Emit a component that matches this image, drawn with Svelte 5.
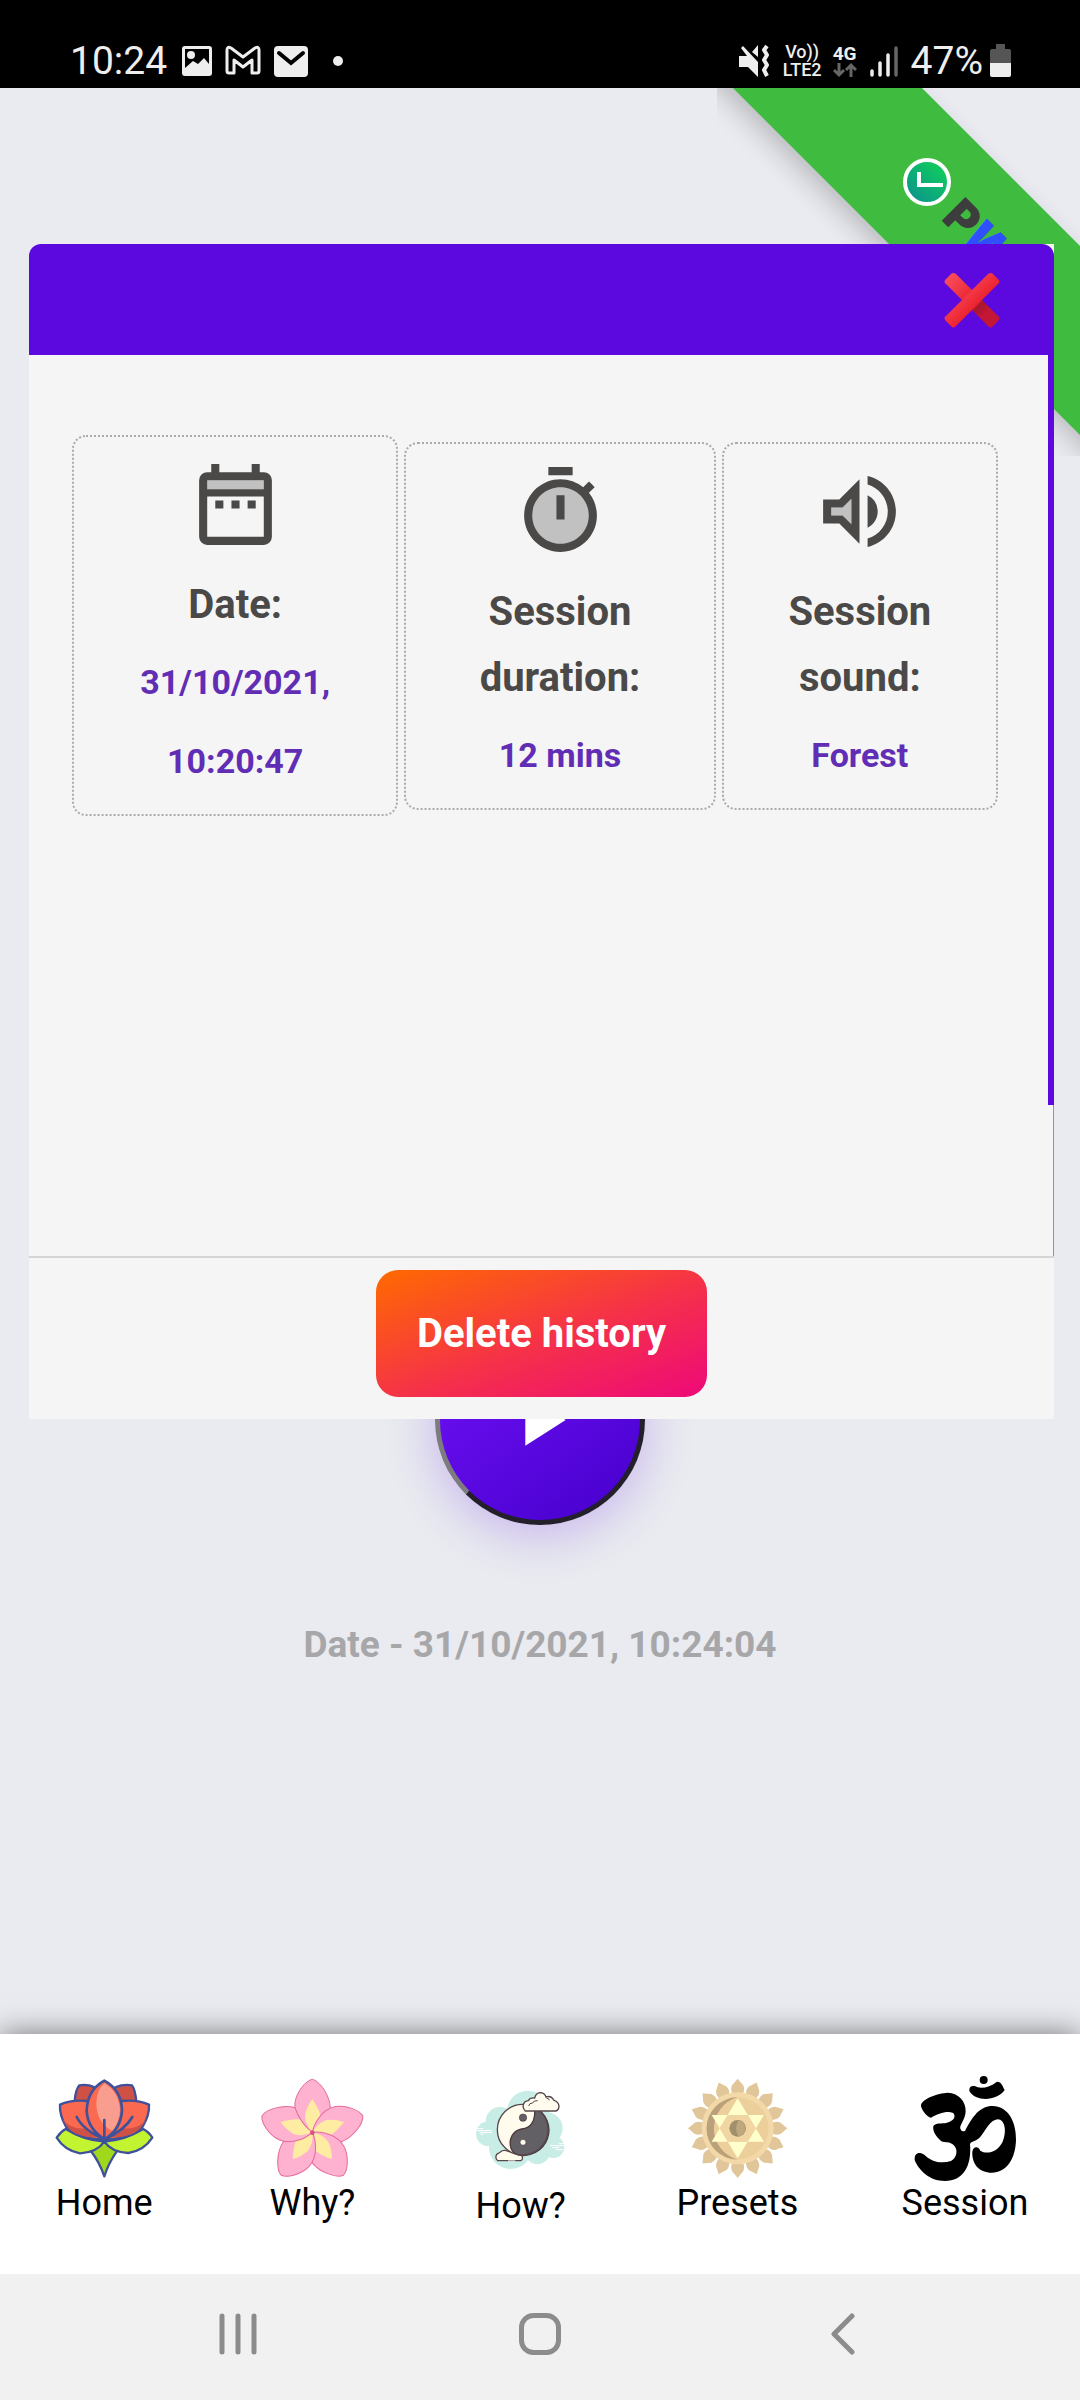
<script>
  const petals = [0, 72, 144, 216, 288];
  const rays = Array.from({ length: 16 }, (_, i) => i * 22.5);
</script>

<svelte:head><title>Meditation session history</title></svelte:head>

<div class="screen">
  <header class="status">
    <div class="status-group">
      <span class="clock">10:24</span>
      <svg width="32" height="32" viewBox="0 0 32 32"><rect x="1" y="1" width="30" height="30" rx="3" fill="#eee" /><path d="M4 4H28V19L23 13L17 19L12 16L4 23Z" fill="#000" /><circle cx="10" cy="10" r="4" fill="#eee" /></svg>
      <svg class="gmail" width="36" height="32" viewBox="0 0 36 32"><path d="M2 5Q2 1 6 3L18 12L30 3Q34 1 34 5V26Q34 28 32 28H27V15L18 22L9 15V28H4Q2 28 2 26Z" fill="none" stroke="#eee" stroke-width="3" stroke-linejoin="round" /></svg>
      <svg width="36" height="32" viewBox="0 0 36 32"><rect x="1" y="1" width="34" height="31" rx="4" fill="#eee" /><path d="M6 8L18 18L30 8" fill="none" stroke="#000" stroke-width="4" stroke-linecap="round" /></svg>
      <span class="dot"></span>
    </div>
    <div class="status-group right">
      <svg width="32" height="34" viewBox="0 0 32 34"><path d="M1 12H9L3 4L5 2L20 18V33L10 23H1ZM20 1V13L14 8Z" fill="#eee" /><path d="M29 2L26 6L29 11L26 16L29 21L26 26L29 32" fill="none" stroke="#eee" stroke-width="4" stroke-linejoin="round" /></svg>
      <span class="volte"><span>Vo))</span><span>LTE2</span></span>
      <span class="net"><span>4G</span>
        <svg width="24" height="16" viewBox="0 0 24 16"><path d="M6 1V13M1 8L6 13L11 8M18 15V3M13 8L18 3L23 8" fill="none" stroke="#666" stroke-width="3" /></svg>
      </span>
      <svg class="signal" width="28" height="32" viewBox="0 0 28 32"><path d="M2 26V30M10 18V30M18 10V30" stroke="#eee" stroke-width="3.5" stroke-linecap="round" /><path d="M26 3V30" stroke="#666" stroke-width="3.5" stroke-linecap="round" /></svg>
      <span class="clock">47%</span>
      <svg width="21" height="34" viewBox="0 0 21 34"><path d="M6 0H15V5H19Q21 5 21 7V20H0V7Q0 5 2 5H6Z" fill="#555" /><path d="M0 19H21V31Q21 33 19 33H2Q0 33 0 31Z" fill="#eee" /></svg>
    </div>
  </header>

  <main>
    <a class="ribbon" href="#install" aria-label="Install PWA">
      <svg width="363" height="368" viewBox="717 88 363 368">
        <defs>
          <linearGradient id="clock" x1="0" y1="1" x2="1" y2="0"><stop offset=".1" stop-color="#0b938e" /><stop offset=".85" stop-color="#10cc5c" /></linearGradient>
          <filter id="soft" x="-20%" y="-20%" width="140%" height="140%"><feGaussianBlur stdDeviation="15" /></filter>
        </defs>
        <path d="M627 -6H802L1180 366V541Z" fill="#000" opacity=".24" filter="url(#soft)" />
        <path d="M633 -12H822L1180 346V535Z" fill="#3fbc3f" />
        <circle cx="927" cy="182" r="22" fill="url(#clock)" stroke="#fff" stroke-width="4" />
        <path d="M919 172V185H943" fill="none" stroke="#fff" stroke-width="4" />
        <g transform="translate(943 222) rotate(45)" class="pwa"><text fill="#3d3d3d" x="-4" y="0">P</text><text fill="#3050ff" x="24" y="0" font-style="italic">W</text><text fill="#3d3d3d" x="73" y="0">A</text></g>
      </svg>
    </a>

    <button class="play" aria-label="Start session">
      <svg width="88" height="88" viewBox="0 0 24 24"><path d="M8 5v14l11-7z" fill="#fff" /></svg>
    </button>
    <p class="today">Date - 31/10/2021, 10:24:04</p>

    <section class="modal" role="dialog" aria-label="Session history">
      <div class="modal-head">
        <button class="close" aria-label="Close">
          <svg width="56" height="56" viewBox="0 0 56 56">
            <defs>
              <linearGradient id="xa" x1="0" y1="0" x2="1" y2="1"><stop offset="0" stop-color="#fb5561" /><stop offset=".5" stop-color="#e8212e" /><stop offset=".62" stop-color="#a8162e" /><stop offset=".75" stop-color="#c41735" /></linearGradient>
              <linearGradient id="xb" x1=".3" y1=".3" x2=".65" y2=".65"><stop offset="0" stop-color="#f74552" /><stop offset="1" stop-color="#e91c28" /></linearGradient>
            </defs>
            <path d="M2 7L7 2Q9 0 12 2L54 44Q57 46 54 49L49 54Q47 57 44 54L2 12Q-1 10 2 7Z" fill="url(#xa)" />
            <path d="M54 7L49 2Q47 0 44 2L2 44Q-1 46 2 49L7 54Q9 57 12 54L54 12Q57 10 54 7Z" fill="url(#xb)" />
          </svg>
        </button>
      </div>

      <div class="modal-body">
        <div class="cards">
          <article class="card">
            <svg width="97" height="97" viewBox="0 0 24 24"><path d="M5 6h14v2.3H5z" fill="#c1c1c1" /><path d="M6 2h2v2h8V2h2v2h1a2 2 0 0 1 2 2v14a2 2 0 0 1-2 2H5a2 2 0 0 1-2-2V6a2 2 0 0 1 2-2h1zM5 6v2.2h14V6zM5 10v10h14V10zM7 11h2v2H7zM11 11h2v2h-2zM15 11h2v2h-2z" fill="#4a4947" fill-rule="evenodd" /></svg>
            <h2>Date:</h2>
            <p>31/10/2021, 10:20:47</p>
          </article>
          <article class="card">
            <svg width="97" height="97" viewBox="0 0 24 24"><circle cx="12" cy="13" r="7.5" fill="#c1c1c1" /><path d="M9 1h6v2H9zM11 8h2v6h-2zM19.03 7.39l1.42-1.42c-.43-.51-.9-.99-1.41-1.41l-1.42 1.42A8.96 8.96 0 0 0 12 4c-4.97 0-9 4.03-9 9s4.02 9 9 9a8.99 8.99 0 0 0 7.03-14.61zM12 20c-3.87 0-7-3.13-7-7s3.13-7 7-7 7 3.13 7 7-3.13 7-7 7z" fill="#4a4947" /></svg>
            <h2>Session duration:</h2>
            <p>12 mins</p>
          </article>
          <article class="card">
            <svg width="97" height="97" viewBox="0 0 24 24"><path d="M5 13h2.83L10 15.17V8.83L7.83 11H5z" fill="#c1c1c1" /><path d="M3 9v6h4l5 5V4L7 9H3zm7-.17v6.34L7.83 13H5v-2h2.83L10 8.83zM16.5 12A4.5 4.5 0 0 0 14 7.97v8.05c1.48-.73 2.5-2.25 2.5-4.02zM14 3.23v2.06c2.89.86 5 3.54 5 6.71s-2.11 5.85-5 6.71v2.06c4.01-.91 7-4.49 7-8.77s-2.99-7.86-7-8.77z" fill="#4a4947" /></svg>
            <h2>Session sound:</h2>
            <p>Forest</p>
          </article>
        </div>
        <span class="thumb"></span>
      </div>

      <div class="modal-foot">
        <button class="delete">Delete history</button>
      </div>
    </section>
  </main>

  <nav class="tabs">
    <a href="#home">
      <svg width="105" height="105" viewBox="156 228 315 315">
        <g stroke="#3f519a" stroke-width="7" stroke-linejoin="round" stroke-linecap="round">
          <path d="M224 305Q226 270 238 256Q262 252 284 262L290 330ZM409 305Q406 270 396 256Q370 252 346 262L335 330Z" fill="#cf5045" />
          <path d="M272 452L313 416L352 452Q325 490 313 529Q298 485 272 452Z" fill="#a0d91b" />
          <path d="M313 425Q250 420 197 387Q182 395 170 413Q194 452 240 460Q290 458 313 425ZM313 425Q375 420 430 387Q448 397 457 413Q432 452 385 459Q335 457 313 425Z" fill="#c3f432" />
          <path d="M313 418Q235 420 198 380Q178 345 180 314Q215 298 262 303L313 418ZM313 418Q390 420 428 380Q449 345 447 314Q412 298 364 303L313 418Z" fill="#fb6950" />
        </g>
        <path d="M187 358Q215 390 255 385L300 412Q225 414 200 378ZM440 358Q412 390 372 385L327 412Q402 414 426 378Z" fill="#cf5045" />
        <path d="M313 242Q365 270 366 332Q362 390 313 418Q262 385 260 332Q262 270 313 242Z" fill="#fb6950" />
        <path d="M313 250Q357 275 360 332Q358 365 337 393Q290 370 289 310Q290 270 313 250Z" fill="#f99e8f" />
        <path d="M313 242Q365 270 366 332Q362 390 313 418Q262 385 260 332Q262 270 313 242ZM230 351Q250 390 313 418Q375 390 397 351M313 360V428" fill="none" stroke="#3f519a" stroke-width="8" stroke-linecap="round" stroke-linejoin="round" />
      </svg>
      <span>Home</span>
    </a>
    <a href="#why">
      <svg width="105" height="105" viewBox="780 228 315 315">
        {#each petals as angle}
          <g transform="rotate({angle} 937 397)">
            <path d="M937 238C958 242 990 285 991 325C970 340 945 370 937 397C915 385 880 350 885 307C890 275 917 242 937 238Z" fill="#ffb1d0" stroke="#e46a9a" stroke-width="3" />
            <path d="M937 297Q960 332 962 350Q943 370 937 397Q915 375 915 345Q920 320 937 297Z" fill="#ffeca3" />
          </g>
        {/each}
        <circle cx="937" cy="398" r="7" fill="#dc4f84" />
      </svg>
      <span>Why?</span>
    </a>
    <a href="#how">
      <svg width="105" height="108" viewBox="212 228 315 324">
        <g fill="#c8ede6"><circle cx="392" cy="335" r="63" /><circle cx="308" cy="364" r="43" /><circle cx="273" cy="401" r="37" /><circle cx="340" cy="442" r="65" /><circle cx="420" cy="455" r="38" /><circle cx="468" cy="441" r="33" /><circle cx="448" cy="385" r="48" /></g>
        <path d="M301 482Q292 475 298 463Q306 458 309 456Q318 447 333 454L372 464Q380 478 370 482Z" fill="#fffcee" stroke="#57474c" stroke-width="4" />
        <circle cx="376" cy="389" r="76" fill="#fffcee" />
        <path d="M412 322C415 360 402 384 373 387C345 392 333 420 341 445Q347 460 360 464A76 76 0 0 0 412 322Z" fill="#626065" stroke="#4b3a3e" stroke-width="4" />
        <circle cx="376" cy="389" r="76" fill="none" stroke="#57474c" stroke-width="4" />
        <circle cx="377" cy="353" r="11" fill="#626065" stroke="#4b3a3e" stroke-width="2" /><circle cx="377" cy="427" r="9" fill="#fffcee" stroke="#4b3a3e" stroke-width="2" />
        <path d="M384 333Q372 320 382 306Q387 303 393 302Q398 292 412 294Q416 278 430 278Q443 280 446 291Q461 285 470 301Q484 305 485 319Q484 331 475 333Z" fill="#fffcee" stroke="#57474c" stroke-width="4" />
        <path d="M394 318Q396 308 406 309Q408 301 421 302M447 294Q456 295 456 301" fill="none" stroke="#57474c" stroke-width="3" />
        <path d="M237 392H284M247 398H284M237 386H258M250 404H258M458 437H503M464 443H486M484 431H503M476 449H498M332 483H354" stroke="#fff" stroke-width="3" />
      </svg>
      <span>How?</span>
    </a>
    <a href="#presets">
      <svg width="105" height="105" viewBox="83 228 315 315">
        {#each rays as angle}
          <path transform="rotate({angle} 241 385)" d="M241 236Q250 247 258 256Q265 273 252 289H230Q217 273 224 256Q232 247 241 236Z" fill="#e0c699" />
        {/each}
        <circle cx="241" cy="385" r="108" fill="#f4d9a8" />
        <circle cx="241" cy="385" r="93" fill="#edcf9c" />
        <path d="M241 292A93 93 0 0 0 241 479A97 97 0 0 1 241 292Z" fill="#b8a17b" />
        <path d="M241 295L320 425H163ZM241 475L320 345H163Z" fill="#ffffcb" />
        <path d="M212 345H270L295 385L270 425H212L187 385Z" fill="#f1d6a4" />
        <circle cx="241" cy="385" r="25" fill="#a2906d" /><path d="M244 361A25 25 0 0 1 244 410Q228 385 244 361Z" fill="#bfa77e" />
      </svg>
      <span>Presets</span>
    </a>
    <a href="#session">
      <svg width="105" height="105" viewBox="763 228 315 315">
        <path d="M790 315C795 295 840 280 870 278C905 280 925 305 924 335C922 360 905 375 908 386Q912 397 922 393C945 350 965 318 1005 318C1058 320 1076 375 1075 420C1073 480 1045 518 1003 518C963 518 942 490 944 455C947 438 962 438 968 452C985 463 1017 460 1035 425C1048 395 1042 358 1020 358C997 360 985 390 967 412C957 424 940 424 937 432C943 500 915 543 862 543C815 543 783 510 771 480C770 457 785 455 800 464C820 485 850 492 880 483C905 470 902 430 868 427C855 427 848 423 844 417C830 402 825 390 827 378C835 367 850 372 868 368C893 361 895 345 885 338C865 332 840 342 820 353C808 352 788 325 790 315Z" />
        <path d="M935 268C937 255 950 257 960 262C978 266 998 260 1018 245C1030 244 1035 258 1041 270C1020 302 955 308 935 273Z" /><circle cx="978" cy="240" r="12" />
      </svg>
      <span>Session</span>
    </a>
  </nav>

  <footer class="system">
    <button aria-label="Recent apps"><svg width="42" height="42" viewBox="0 0 42 42"><path d="M5 3V39M21 3V39M37 3V39" /></svg></button>
    <button aria-label="Home screen"><svg width="42" height="42" viewBox="0 0 42 42"><rect x="2.5" y="2.5" width="37" height="37" rx="12" /></svg></button>
    <button aria-label="Back"><svg width="42" height="42" viewBox="0 0 42 42"><path d="M31 3L13 21L31 39" /></svg></button>
  </footer>
</div>

<style>
  :global(body) { margin: 0; }
  * { box-sizing: border-box; }
  button { border: 0; padding: 0; background: none; font: inherit; cursor: pointer; }
  a { color: inherit; text-decoration: none; }
  svg { display: block; flex: none; }
  h2, p { margin: 0; }

  .screen { display: flex; flex-direction: column; min-height: 100vh; font-family: Roboto, sans-serif; background: #e9ebf0; }

  .status { display: flex; justify-content: space-between; align-items: flex-end; padding: 0 69px 8px 70px; height: 88px; background: #000; color: #eee; }
  .status-group { display: flex; align-items: center; gap: 12px; height: 38px; }
  .clock { font-size: 39px; line-height: 38px; }
  .status-group > .clock:first-child { margin-right: 2px; }
  .dot { width: 10px; height: 10px; margin-left: 12px; border-radius: 50%; background: #eee; }
  .right { gap: 7px; }
  .volte { display: flex; flex-direction: column; align-items: center; font-size: 18px; line-height: 18px; font-weight: 500; margin: 0 4px 0 6px; }
  .net { display: flex; flex-direction: column; align-items: center; font-size: 19px; line-height: 17px; font-weight: 700; }
  .signal { margin: 0 6px; }

  main { position: relative; flex: 1; display: flex; flex-direction: column; align-items: center; padding: 1227px 0 40px; }
  .ribbon { position: absolute; top: 0; right: 0; overflow: hidden; }
  .pwa { font-family: Inter, sans-serif; font-weight: 900; font-size: 46px; }

  .play { display: flex; align-items: center; justify-content: center; width: 210px; height: 210px; border: 5px solid #231f2b; border-left-color: #7d7b80; border-radius: 50%; background: linear-gradient(145deg, #7212fb, #5a08e0 55%, #4500cb); box-shadow: 0 10px 50px rgba(92, 9, 224, 0.24); }
  .today { margin-top: 98px; font-size: 37px; line-height: 44px; font-weight: 700; color: #a7a7a9; }

  .modal { position: absolute; top: 156px; left: 29px; right: 26px; background: #f5f5f5; border-radius: 12px 0 0 0; }
  .modal-head { display: flex; align-items: center; justify-content: flex-end; height: 111px; padding-right: 54px; border-radius: 12px 12px 0 0; background: #5c09e0; }
  .modal-body { position: relative; min-height: 901px; padding: 80px 55px 0 43px; border-right: 1px solid #a87ee0; }
  .thumb { position: absolute; top: 0; right: -1px; width: 6px; height: 750px; background: #5c09e0; }
  .cards { display: grid; grid-template-columns: 326fr 311fr 276fr; gap: 6px; align-items: center; }
  .card { display: flex; flex-direction: column; align-items: center; padding: 19px 56px 13px; border: 2px dotted #ababab; border-radius: 14px; text-align: center; }
  .card h2 { margin: 19px 0 5px; font-size: 40px; line-height: 66px; font-weight: 700; color: #4a4947; }
  .card p { font-size: 34px; line-height: 79px; font-weight: 700; color: #602db4; }
  .modal-foot { display: flex; justify-content: center; padding: 12px 0 22px; border-top: 2px solid #d5d5d5; }
  .delete { padding: 40px 41px; border-radius: 22px; background: linear-gradient(to bottom right, #ff6a00, #f5304a 55%, #ee0979); color: #fff; font-size: 40px; line-height: 47px; font-weight: 700; }

  .tabs { position: relative; display: flex; justify-content: space-around; padding: 42px 0 47px; background: #fff; box-shadow: 0 0 28px rgba(0, 0, 0, 0.5); }
  .tabs a { display: flex; flex-direction: column; align-items: center; min-width: 104px; gap: 1px; font-size: 36px; line-height: 42px; color: #000; }

  .system { position: relative; display: flex; justify-content: center; gap: 260px; height: 126px; padding-bottom: 6px; background: #f1f1f1; }
  .system svg { fill: none; stroke: #8c8c8c; stroke-width: 5; stroke-linecap: round; stroke-linejoin: round; }
</style>
